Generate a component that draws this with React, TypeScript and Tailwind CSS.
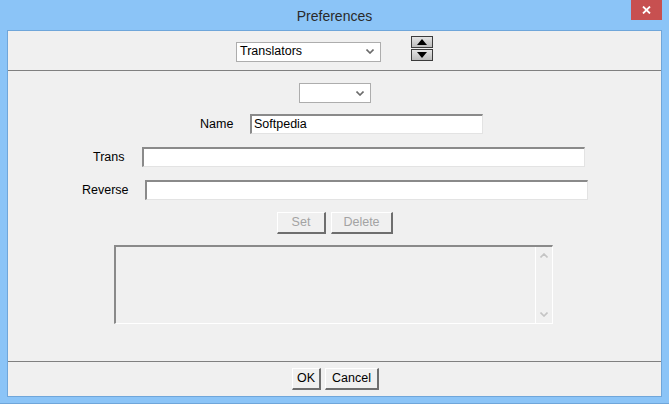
import React from "react"

const font = { fontFamily: '"Liberation Sans", Arial, sans-serif' }

const Chevron = ({ up = false, color = "#6b6b6b" }: { up?: boolean; color?: string }) => (
  <svg width="8" height="5" viewBox="0 0 8 5" className="block">
    <path d={up ? "M0.5 4.5 L4 1 L7.5 4.5" : "M0.5 0.5 L4 4 L7.5 0.5"} fill="none" stroke={color} strokeWidth="1.6" />
  </svg>
)

const Combo = ({ value, width }: { value?: string; width: string }) => (
  <div className={`${width} h-[20px] bg-white border border-[#adadad] flex items-center justify-between pl-[3px] pr-[6px]`}>
    <span className="text-[12.5px] text-black leading-none">{value}</span>
    <Chevron />
  </div>
)

const Field = ({ value, width }: { value?: string; width: string }) => (
  <div
    className={`${width} h-[20px] bg-white border-t-2 border-l-2 border-b border-r border-t-[#8a8a8a] border-l-[#8a8a8a] border-b-[#e3e3e3] border-r-[#e3e3e3] flex items-center pl-[2px]`}
  >
    <span className="text-[12.5px] text-black leading-none">{value}</span>
  </div>
)

const Button = ({ label, width, disabled = false }: { label: string; width: string; disabled?: boolean }) => (
  <div
    className={`${width} h-[22px] bg-[#f0f0f0] border-t border-l border-t-white border-l-white border-b-2 border-r-2 border-b-[#6e6e6e] border-r-[#6e6e6e] flex items-center justify-center text-[12.5px] ${
      disabled ? "text-[#a3a3a3]" : "text-black"
    }`}
  >
    {label}
  </div>
)

const ArrowButton = ({ up = false }: { up?: boolean }) => (
  <div className="w-[22px] h-[12px] border border-[#3c3c3c] bg-gradient-to-b from-[#e4e4e4] to-[#bcbcbc] flex items-center justify-center">
    <svg width="10" height="6" viewBox="0 0 10 6">
      <path d={up ? "M0 6 L5 0 L10 6 Z" : "M0 0 L5 6 L10 0 Z"} fill="#000" />
    </svg>
  </div>
)

export default function App() {
  return (
    <div className="w-[669px] h-[404px] bg-[#8bc4f7] flex flex-col overflow-hidden" style={font}>
      {/* title bar */}
      <div className="h-[30px] grid grid-cols-[1fr_auto_1fr] items-start">
        <div />
        <div className="pt-[6px] text-[14px] text-[#2a2a2a]">Preferences</div>
        <div className="flex justify-end pr-[7px]">
          <div className="w-[31px] h-[20px] bg-[#c75050] flex items-center justify-center">
            <svg width="9" height="8" viewBox="0 0 9 8">
              <path d="M1 0.5 L8 7.5 M8 0.5 L1 7.5" stroke="#fff" strokeWidth="1.8" />
            </svg>
          </div>
        </div>
      </div>

      {/* client */}
      <div className="mx-[7px] h-[367px] border border-[#6fa6da] bg-[#f0f0f0] flex flex-col">
        <div className="h-[40px] shrink-0 flex items-center justify-center gap-[30px] border-b border-[#808080]">
          <div className="mt-[2px]">
            <Combo value="Translators" width="w-[145px]" />
          </div>
          <div className="flex flex-col gap-[1px] mt-[-5px]">
            <ArrowButton up />
            <ArrowButton />
          </div>
        </div>

        <div className="h-[291px] shrink-0 flex flex-col border-b border-[#808080]">
          <div className="mt-[12px] flex justify-center">
            <Combo width="w-[72px]" />
          </div>

          <div className="mt-[11px] flex items-center">
            <span className="ml-[192px] w-[50px] text-[12.5px] text-black">Name</span>
            <Field value="Softpedia" width="w-[233px]" />
          </div>

          <div className="mt-[13px] flex items-center">
            <span className="ml-[85px] w-[49px] text-[12.5px] text-black">Trans</span>
            <Field width="w-[443px]" />
          </div>

          <div className="mt-[13px] flex items-center">
            <span className="ml-[74px] w-[63px] text-[12.5px] text-black">Reverse</span>
            <Field width="w-[443px]" />
          </div>

          <div className="mt-[12px] flex justify-center gap-[5px] pl-[1px]">
            <Button label="Set" width="w-[49px]" disabled />
            <Button label="Delete" width="w-[62px]" disabled />
          </div>

          <div className="mt-[11px] ml-[106px] w-[439px] h-[79px] flex bg-[#f0f0f0] border-t-2 border-l-2 border-b border-r border-t-[#8a8a8a] border-l-[#8a8a8a] border-b-white border-r-white">
            <div className="flex-1" />
            <div className="w-[17px] border-l border-white flex flex-col items-center justify-between py-[6px]">
              <Chevron up color="#c4c4c4" />
              <Chevron color="#c4c4c4" />
            </div>
          </div>
        </div>

        <div className="flex-1 flex items-center justify-center gap-[4px] pl-[2px]">
          <Button label="OK" width="w-[29px]" />
          <Button label="Cancel" width="w-[54px]" />
        </div>
      </div>
      <div className="flex-1 border-b border-[#6fa6da]" />
    </div>
  )
}
